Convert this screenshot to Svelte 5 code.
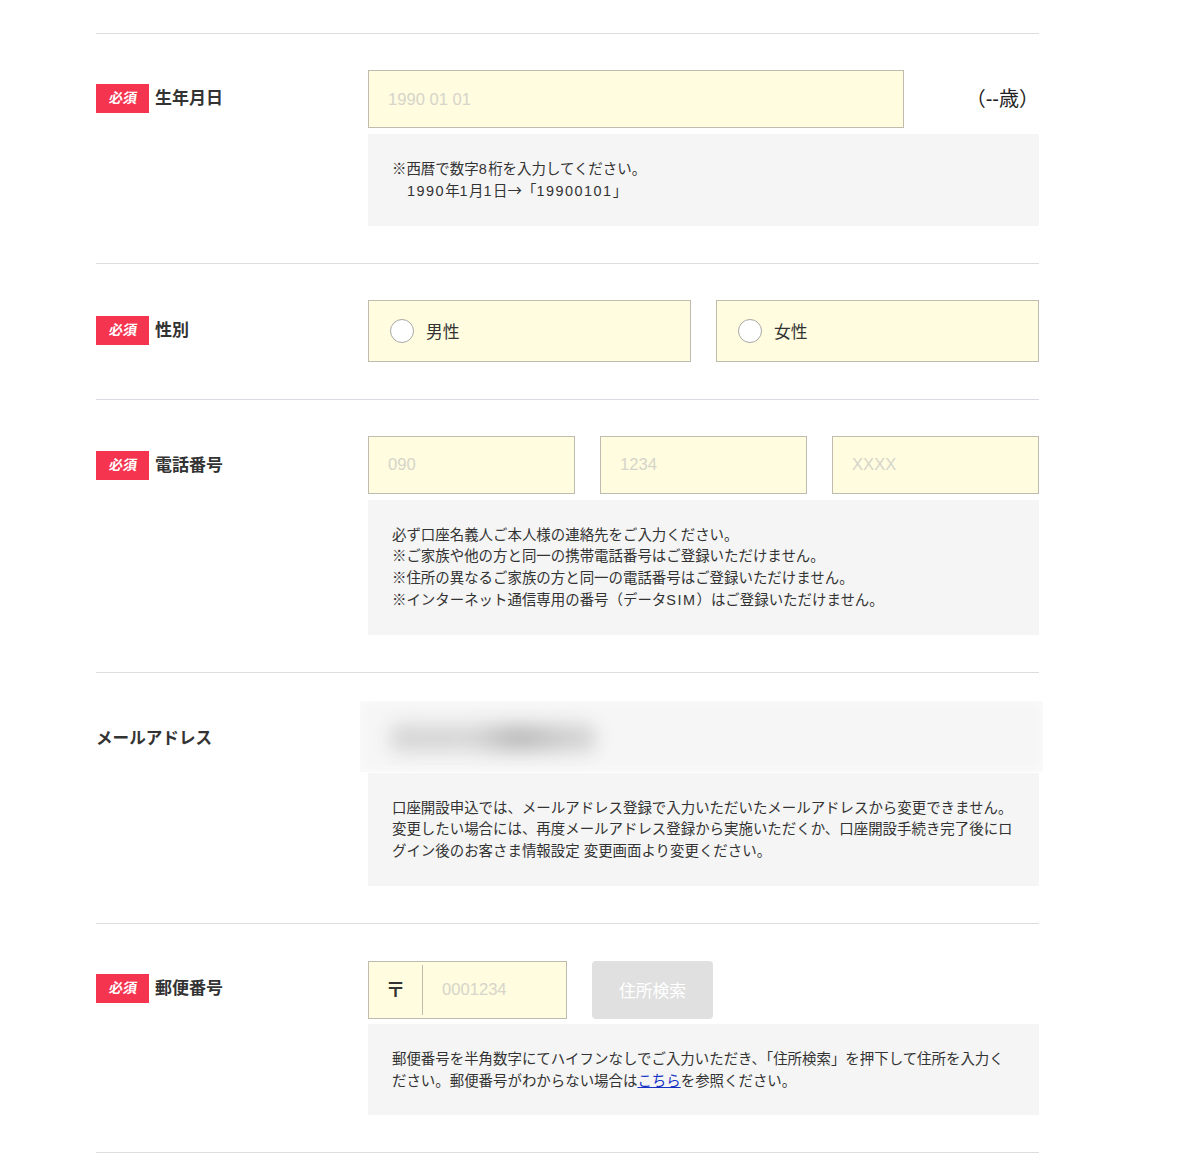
<script>
	const phoneHints = ['090', '1234', 'XXXX']
	const genders = ['男性', '女性']
</script>

<div class="form">
	<section class="row">
		<div class="head"><span class="req"><span>必須</span></span><span class="name">生年月日</span></div>
		<div class="body">
			<div class="birth">
				<input class="field wide" type="text" placeholder="1990 01 01" />
				<span class="age">（--歳）</span>
			</div>
			<div class="note">
				※西暦で数字<span class="num">8</span>桁を入力してください。<br />
				<span class="indent"><span class="num">1990</span>年<span class="num">1</span>月<span class="num">1</span>日<span class="arrow">→</span>「<span class="num">19900101</span>」</span>
			</div>
		</div>
	</section>

	<section class="row">
		<div class="head low"><span class="req"><span>必須</span></span><span class="name">性別</span></div>
		<div class="body">
			<div class="genders">
				{#each genders as g}
					<label class="gender">
						<input type="radio" name="gender" />
						<span class="dot"></span>
						<span>{g}</span>
					</label>
				{/each}
			</div>
		</div>
	</section>

	<section class="row">
		<div class="head mid"><span class="req"><span>必須</span></span><span class="name">電話番号</span></div>
		<div class="body">
			<div class="phones">
				{#each phoneHints as hint}
					<input class="field" type="text" placeholder={hint} />
				{/each}
			</div>
			<div class="note">
				必ず口座名義人ご本人様の連絡先をご入力ください。<br />
				※ご家族や他の方と同一の携帯電話番号はご登録いただけません。<br />
				※住所の異なるご家族の方と同一の電話番号はご登録いただけません。<br />
				※インターネット通信専用の番号（データ<span class="num">SIM</span>）はご登録いただけません。
			</div>
		</div>
	</section>

	<section class="row">
		<div class="head mail"><span class="name plain">メールアドレス</span></div>
		<div class="body">
			<div class="masked"><div class="smear"></div></div>
			<div class="note tight">
				口座開設申込では、メールアドレス登録で入力いただいたメールアドレスから変更できません。<br />
				変更したい場合には、再度メールアドレス登録から実施いただくか、口座開設手続き完了後にロ<br />
				グイン後のお客さま情報設定 変更画面より変更ください。
			</div>
		</div>
	</section>

	<section class="row">
		<div class="head"><span class="req"><span>必須</span></span><span class="name">郵便番号</span></div>
		<div class="body">
			<div class="zip-line">
				<div class="zip">
					<span class="mark">〒</span>
					<input type="text" placeholder="0001234" />
				</div>
				<button type="button" disabled>住所検索</button>
			</div>
			<div class="note">
				郵便番号を半角数字にてハイフンなしでご入力いただき、「住所検索」を押下して住所を入力く<br />
				ださい。郵便番号がわからない場合は<a href="#zip">こちら</a>を参照ください。
			</div>
		</div>
	</section>
</div>

<style>
:global(body) {
	background: #fff;
	color: #333;
	font-family: "Liberation Sans", "Noto Sans CJK JP", sans-serif;
}

.form {
	width: 943px;
	margin-left: 96px;
	padding-top: 33px;
	box-sizing: border-box;
}

.row {
	display: grid;
	grid-template-columns: 272px 671px;
	border-top: 1px solid #dcdddd;
	padding: 36px 0 37px;
}

.row:last-child {
	border-bottom: 1px solid #dcdddd;
}

.row:nth-child(3) {
	border-top-color: #d9dae8;
}

.row:last-child .body {
	padding-top: 1px;
}

.row:last-child .note {
	margin-top: 5px;
}

.head {
	display: flex;
	align-items: center;
	gap: 6px;
	height: 29px;
	margin-top: 14px;
}

.head.low {
	margin-top: 16px;
}

.head.mid {
	margin-top: 15px;
}

.head.mail {
	margin-top: 14px;
}

.req {
	width: 53px;
	height: 29px;
	line-height: 29px;
	text-align: center;
	background: #f5344f;
	color: #fff;
	font-size: 14px;
	font-weight: bold;
}

.req span {
	display: inline-block;
	transform: skewX(-7deg);
}

.name {
	font-size: 17px;
	font-weight: bold;
	color: #333;
	position: relative;
	top: -2px;
}

.name.plain {
	top: 0;
	font-size: 16.6px;
}

.birth,
.genders,
.phones,
.zip-line {
	display: flex;
}

.field {
	width: 207px;
	height: 58px;
	padding: 1px 19px 0;
	box-sizing: border-box;
	background: #fffcdf;
	border: 1px solid #bdbcae;
	font: inherit;
	font-size: 16.6px;
	outline: none;
}

.field.wide {
	width: 536px;
}

.field::placeholder,
.zip input::placeholder {
	color: #d6d5ca;
	opacity: 1;
}

.age {
	flex: 1;
	height: 58px;
	text-align: right;
	line-height: 58px;
	font-size: 20px;
	color: #222;
}

.note {
	margin-top: 6px;
	padding: 25px 24px 23.2px;
	background: #f5f5f5;
	font-size: 14.44px;
	line-height: 21.7px;
	color: #333;
	white-space: nowrap;
}

.note.tight {
	margin-top: 1px;
}

.num {
	letter-spacing: 1.5px;
}

.arrow {
	font-family: "Noto Sans CJK JP", sans-serif;
	line-height: 1;
}

.indent {
	margin-left: 15px;
}

.note a {
	color: #1733c4;
	text-decoration: underline;
}

.genders {
	gap: 25px;
}

.gender {
	width: 323px;
	height: 62px;
	box-sizing: border-box;
	display: flex;
	align-items: center;
	gap: 12px;
	padding-left: 21px;
	background: #fffcdf;
	border: 1px solid #bdbcae;
	font-size: 16.8px;
	color: #333;
}

.gender input {
	display: none;
}

.dot {
	width: 24px;
	height: 24px;
	box-sizing: border-box;
	border-radius: 50%;
	background: #fff;
	border: 1px solid #a8a8a4;
}

.phones {
	gap: 25px;
}

.masked {
	height: 71px;
	margin: -8px -4px 0 -8px;
	background: #f6f6f6;
	box-shadow: inset 0 0 12px #fcfcfc;
	overflow: hidden;
	position: relative;
}

.smear {
	position: absolute;
	left: 30px;
	top: 23px;
	width: 206px;
	height: 28px;
	border-radius: 10px;
	background: linear-gradient(90deg, #d6d6d6, #d8d8d8 40%, #bcbcbc 62%, #d0d0d0 85%, #d6d6d6);
	filter: blur(9px);
}

.zip-line {
	gap: 25px;
}

.zip {
	width: 199px;
	height: 58px;
	box-sizing: border-box;
	display: flex;
	align-items: center;
	background: #fffcdf;
	border: 1px solid #bdbcae;
}

.mark {
	width: 53px;
	height: 50px;
	line-height: 50px;
	text-align: center;
	border-right: 1px solid #bdbcae;
	font-size: 20px;
	font-weight: bold;
	color: #333;
	flex: none;
}

.zip input {
	width: 130px;
	height: 100%;
	box-sizing: border-box;
	padding: 1px 0 0 19px;
	border: none;
	background: transparent;
	font: inherit;
	font-size: 16.6px;
	outline: none;
}

button {
	width: 121px;
	height: 58px;
	border: none;
	border-radius: 4px;
	background: #e0e0e0;
	color: #fff;
	font: inherit;
	font-size: 16.8px;
}
</style>
